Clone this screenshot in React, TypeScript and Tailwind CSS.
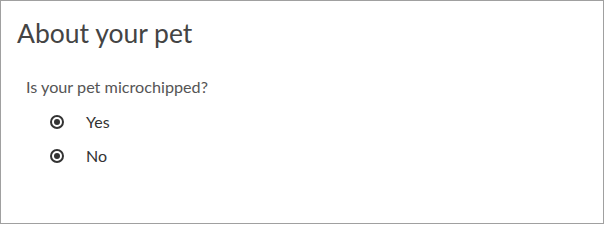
import { useState } from "react";

const OPTIONS = ["Yes", "No"];

export default function App() {
  const [value, setValue] = useState("Yes");

  return (
    <div
      className="h-[224px] w-[604px] border border-[#a0a0a0] bg-white text-[#444]"
      style={{ fontFamily: "Lato, 'Open Sans', sans-serif" }}
    >
      {/* Heading */}
      <h1 className="ml-4 mt-[16px] text-[26.5px] leading-[32px] text-[#444]">About your pet</h1>

      {/* Question */}
      <p className="ml-[25px] mt-[28px] text-[16.2px] leading-[20px] text-[#555]">
        Is your pet microchipped?
      </p>

      <div className="ml-[49px] mt-[8px] flex flex-col">
        {OPTIONS.map((opt) => (
          <label
            key={opt}
            className="flex h-[34px] cursor-pointer items-center gap-[22px] text-[16px] text-[#333]"
            onClick={() => setValue(opt)}
          >
            {/* both dots shown as in the reference */}
            <span className="flex h-[14px] w-[14px] items-center justify-center rounded-full border-2 border-[#333]">
              <span className="h-[6px] w-[6px] rounded-full bg-[#333]" />
            </span>
            {opt}
          </label>
        ))}
      </div>
    </div>
  );
}
